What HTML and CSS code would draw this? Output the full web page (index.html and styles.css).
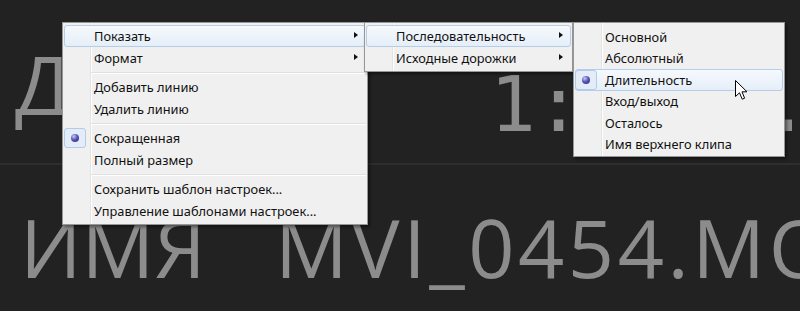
FILE: index.html
```html
<!DOCTYPE html>
<html lang="ru">
<head>
    <meta charset="UTF-8">
    <title>Инфо клипа</title>
    <link rel="stylesheet" href="styles.css">
</head>
<body>

    <!-- Панель с крупным текстом -->
    <div class="panel">
        <div class="row row-duration">
            <div class="label">ДЛИТ</div>
            <div class="value mono">1:00:0.</div>
        </div>
        <div class="row row-name">
            <div class="label">ИМЯ</div>
            <div class="value">MVI_0454.MOV</div>
        </div>
    </div>

    <!-- Контекстное меню -->
    <div class="menu menu-main">
        <div class="item hot">Показать<span class="arrow"></span></div>
        <div class="item">Формат<span class="arrow"></span></div>
        <div class="sep"></div>
        <div class="item">Добавить линию</div>
        <div class="item">Удалить линию</div>
        <div class="sep"></div>
        <div class="item checked"><span class="radio"></span>Сокращенная</div>
        <div class="item">Полный размер</div>
        <div class="sep"></div>
        <div class="item">Сохранить шаблон настроек...</div>
        <div class="item">Управление шаблонами настроек...</div>
    </div>

    <div class="menu menu-show">
        <div class="item hot">Последовательность<span class="arrow"></span></div>
        <div class="item">Исходные дорожки<span class="arrow"></span></div>
    </div>

    <div class="menu menu-seq">
        <div class="item">Основной</div>
        <div class="item">Абсолютный</div>
        <div class="item hot checked"><span class="radio"></span>Длительность</div>
        <div class="item">Вход/выход</div>
        <div class="item">Осталось</div>
        <div class="item">Имя верхнего клипа</div>
    </div>

    <!-- Курсор мыши -->
    <svg class="cursor" width="13" height="21" viewBox="0 0 13 21">
        <path d="M0.5 0.5 L0.5 16.5 L4.5 12.8 L7.2 19.2 L9.6 18.2 L7 11.8 L12 11.8 Z" fill="#fff" stroke="#000" stroke-width="1" stroke-linejoin="miter"/>
    </svg>

</body>
</html>
```

FILE: styles.css
```css
body {
    margin: 0;
    background-color: #222;
    overflow: hidden;
}

/* Панель */
.panel {
    width: 800px;
    height: 311px;
    background-color: #222;
    color: #8c8c8c;
    font-family: "Open Sans", sans-serif;
    overflow: hidden;
}

.row {
    display: flex;
    white-space: nowrap;
}

.label {
    flex-shrink: 0;
    box-sizing: border-box;
}

.row-duration {
    height: 163px;
    border-bottom: 2px solid #2e2e2e;
}

.row-duration .label {
    width: 490px;
    padding: 43px 0 0 15px;
}

.row-duration .value {
    padding-top: 67px;
}

.row-name {
    padding-top: 41px;
}

.row-name .label {
    width: 275px;
    padding-left: 20px;
}

.row-name .value {
    letter-spacing: 3.5px;
}

.label, .value {
    font-size: 81px;
    line-height: 81px;
}

.mono {
    font-family: "DejaVu Sans Mono", monospace;
    font-size: 76px;
    line-height: 76px;
}

/* Меню */
.menu {
    position: absolute;
    box-sizing: border-box;
    background: linear-gradient(to right, transparent 27px, #e2e3e3 27px, #e2e3e3 28px, #fff 28px, #fff 29px, transparent 29px), #f0f0f0;
    border: 1px solid #979797;
    padding: 2px 1px;
    box-shadow: 2px 2px 3px rgba(0, 0, 0, 0.45);
    font-family: "Noto Sans", sans-serif;
    font-size: 12.8px;
    color: #111;
}

.menu-main {
    left: 62px;
    top: 22px;
    width: 306px;
}

.menu-show {
    left: 364px;
    top: 22px;
    width: 209px;
}

.menu-seq {
    left: 573px;
    top: 22px;
    width: 212px;
    padding: 3px 1px 1px;
}

.item {
    position: relative;
    box-sizing: border-box;
    height: 22px;
    display: flex;
    align-items: center;
    padding-left: 29px;
    border: 1px solid transparent;
    border-radius: 3px;
    white-space: nowrap;
}

.menu-seq .item {
    height: 21.5px;
}

.item.hot {
    border-color: #b4cde9;
    background: linear-gradient(#f6f9fd, #e5eef8);
}

.arrow {
    position: absolute;
    right: 7px;
    top: 6px;
    border-left: 4px solid #111;
    border-top: 3.5px solid transparent;
    border-bottom: 3.5px solid transparent;
}

.sep {
    height: 7px;
    margin-left: 27px;
    background: linear-gradient(transparent 3px, #e0e0e0 3px, #e0e0e0 4px, #fff 4px, #fff 5px, transparent 5px);
}

.radio {
    position: absolute;
    left: -1px;
    top: 0;
    width: 22px;
    height: 20px;
    box-sizing: border-box;
    border: 1px solid #b2cbec;
    border-radius: 3px;
    background: #e4ecf8;
}

.radio::after {
    content: "";
    position: absolute;
    left: 6px;
    top: 5px;
    width: 8px;
    height: 8px;
    border-radius: 50%;
    background: radial-gradient(circle at 35% 30%, #c9c9f2 0, #5858b8 45%, #262670 100%);
}

.cursor {
    position: absolute;
    left: 735px;
    top: 80px;
}
```
